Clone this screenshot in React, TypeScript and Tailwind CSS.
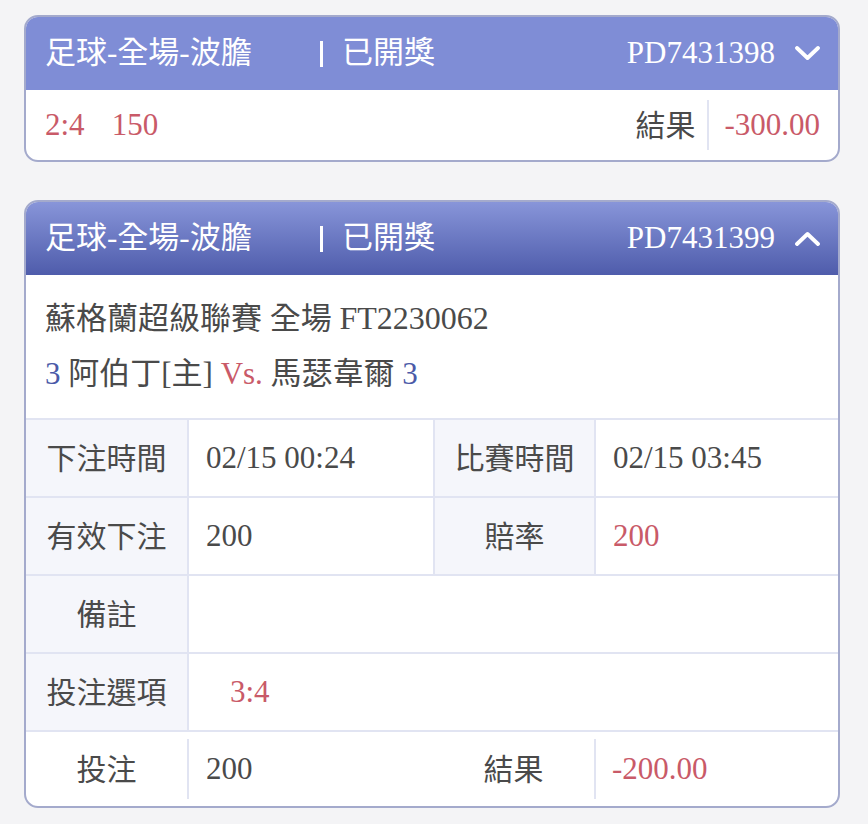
import React from 'react';

const FONT = "font-['Liberation_Serif','Noto_Sans_CJK_TC',serif]";

function Chevron({ up }: { up?: boolean }) {
  return (
    <svg width="25" height="15" viewBox="0 0 25 15" fill="none" className="ml-[20px]">
      <path
        d={up ? 'M2 13 L12.5 3 L23 13' : 'M2 2 L12.5 12 L23 2'}
        stroke="white"
        strokeWidth="3.8"
        strokeLinecap="round"
        strokeLinejoin="round"
      />
    </svg>
  );
}

function Header({ id, open }: { id: string; open?: boolean }) {
  return (
    <div
      className={`h-[73px] flex items-center pl-[19px] pr-[18px] text-white text-[31px] ${
        open ? 'bg-gradient-to-b from-[#8895d9] to-[#4f5cab]' : 'bg-[#7f8dd6]'
      }`}
    >
      <span className="w-[275px]">足球-全場-波膽</span>
      <span className="w-[3px] h-[26px] bg-white" />
      <span className="ml-[19px]">已開獎</span>
      <span className="ml-auto">{id}</span>
      <Chevron up={open} />
    </div>
  );
}

function Row({ cells }: { cells: { label: string; value?: string; red?: boolean; indent?: boolean }[] }) {
  return (
    <div className="h-[78px] border-t-2 border-[#e1e4f2] flex">
      {cells.map((c, i) => (
        <React.Fragment key={i}>
          <div
            className={`${i === 0 ? 'w-[161px]' : 'w-[161px] border-l-2 border-[#e1e4f2]'} bg-[#f5f6fb] flex items-center justify-center`}
          >
            {c.label}
          </div>
          <div
            className={`${i === 0 && cells.length > 1 ? 'w-[246px]' : 'flex-1'} border-l-2 border-[#e1e4f2] flex items-center text-[31px] ${
              c.indent ? 'pl-[41px]' : 'pl-[17px]'
            } ${c.red ? 'text-[#c95a68]' : ''}`}
          >
            {c.value}
          </div>
        </React.Fragment>
      ))}
    </div>
  );
}

export default function App() {
  return (
    <div className={`min-h-screen bg-[#f4f4f6] pt-[15px] pb-[16px] text-[30px] text-[#4a4a4a] ${FONT}`}>
      {/* collapsed card */}
      <div className="ml-[24px] w-[816px] border-2 border-[#a4aacc] rounded-[14px] overflow-hidden bg-white">
        <Header id="PD7431398" />
        <div className="h-[70px] flex items-center pl-[19px] pr-[18px]">
          <span className="text-[#c95a68] text-[31px]">2:4</span>
          <span className="ml-[27px] text-[#c95a68] text-[31px]">150</span>
          <span className="ml-auto">結果</span>
          <span className="w-[2px] h-[50px] bg-[#e1e4f2] ml-[12px]" />
          <span className="ml-[15px] text-[#c95a68] text-[31px]">-300.00</span>
        </div>
      </div>

      {/* expanded card */}
      <div className="mt-[38px] ml-[24px] w-[816px] border-2 border-[#a4aacc] rounded-[14px] overflow-hidden bg-white">
        <Header id="PD7431399" open />
        <div className="pl-[19px] pt-[16px] pb-[17px] leading-[55px] text-[31px]">
          <div>
            蘇格蘭超級聯賽 全場 <span className="text-[32px]">FT2230062</span>
          </div>
          <div>
            <span className="text-[#4b5aa8]">3</span> 阿伯丁[主] <span className="text-[#c95a68]">Vs.</span> 馬瑟韋爾{' '}
            <span className="text-[#4b5aa8]">3</span>
          </div>
        </div>
        <Row
          cells={[
            { label: '下注時間', value: '02/15 00:24' },
            { label: '比賽時間', value: '02/15 03:45' },
          ]}
        />
        <Row
          cells={[
            { label: '有效下注', value: '200' },
            { label: '賠率', value: '200', red: true },
          ]}
        />
        <Row cells={[{ label: '備註', value: '' }]} />
        <Row cells={[{ label: '投注選項', value: '3:4', red: true, indent: true }]} />
        <div className="h-[76px] border-t-2 border-[#e1e4f2] flex items-center">
          <div className="w-[161px] flex justify-center">投注</div>
          <span className="w-[2px] h-[60px] bg-[#e1e4f2]" />
          <div className="w-[244px] pl-[17px] text-[31px]">200</div>
          <div className="w-[161px] flex justify-center">結果</div>
          <span className="w-[2px] h-[60px] bg-[#e1e4f2]" />
          <div className="flex-1 pl-[16px] text-[#c95a68] text-[31px]">-200.00</div>
        </div>
      </div>
    </div>
  );
}
